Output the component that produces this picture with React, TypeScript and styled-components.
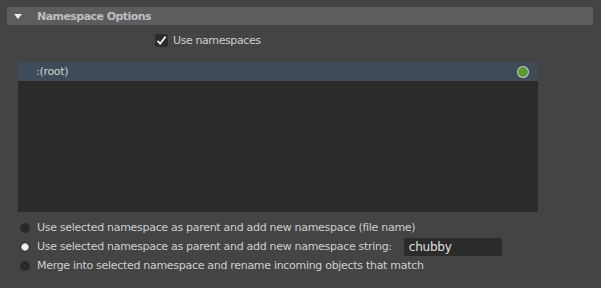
import React from "react";
import styled, { createGlobalStyle } from "styled-components";

const Global = createGlobalStyle`
  html, body { margin: 0; padding: 0; background: #444444; }
  body { font-family: "DejaVu Sans", "Liberation Sans", sans-serif; font-size: 11px; color: #cfcfcf; letter-spacing: -0.3px; }
`;

const Page = styled.div`
  width: 601px;
  height: 288px;
  padding-top: 7px;
  box-sizing: border-box;
  overflow: hidden;
`;

const Header = styled.div`
  margin: 0 8px 0 7px;
  height: 18px;
  border-radius: 2px;
  background: #5d5d5d;
  display: flex;
  align-items: center;
`;

const Triangle = styled.span`
  width: 0;
  height: 0;
  margin-left: 7px;
  border-left: 4.5px solid transparent;
  border-right: 4.5px solid transparent;
  border-top: 5px solid #eeeeee;
`;

const HeaderTitle = styled.span`
  margin-left: 15px;
  font-weight: bold;
  letter-spacing: -0.55px;
  color: #bdbdc2;
`;

const CheckRow = styled.label`
  display: flex;
  align-items: center;
  margin-top: 9px;
  padding-left: 155px;
  height: 13px;
  letter-spacing: -0.4px;
`;

const Box = styled.span`
  width: 13px;
  height: 13px;
  border-radius: 2px;
  background: #2b2b2b;
  display: flex;
  align-items: center;
  justify-content: center;
  margin-right: 5px;
`;

const List = styled.div`
  margin: 15px 0 0 18px;
  width: 520px;
  height: 150px;
  background: #2b2b2b;
`;

const ListRow = styled.div<{ $selected?: boolean }>`
  height: 19px;
  display: flex;
  align-items: center;
  padding: 0 10px 0 18px;
  background: ${(p) => (p.$selected ? "#3f4b59" : "transparent")};
  color: #d2d2d2;
`;

const RowLabel = styled.span`
  flex: 1;
`;

const Dot = styled.span`
  width: 10px;
  height: 10px;
  border-radius: 50%;
  background: #5b9a2f;
  box-shadow: 0 0 0 1px #c9cfd3;
`;

const Options = styled.div`
  margin-top: 6px;
  padding-left: 20px;
  display: flex;
  flex-direction: column;
`;

const OptionRow = styled.label`
  height: 19px;
  display: flex;
  align-items: center;
`;

const Radio = styled.span<{ $checked?: boolean }>`
  width: 10px;
  height: 10px;
  border-radius: 50%;
  margin-right: 7px;
  background: ${(p) =>
    p.$checked
      ? "radial-gradient(circle, #f0f0f0 0 2.6px, #b5b5b5 3.2px 3.6px, #2a2a2a 4.3px)"
      : "#2a2a2a"};
`;

const TextField = styled.div`
  margin-left: 12px;
  width: 98px;
  height: 18px;
  box-sizing: border-box;
  border-radius: 2px;
  background: #2b2b2b;
  color: #e0e0e0;
  display: flex;
  align-items: center;
  padding-left: 5px;
  font-size: 12px;
  letter-spacing: -0.2px;
`;

export default function App() {
  return (
    <Page>
      <Global />
      <Header>
        <Triangle />
        <HeaderTitle>Namespace Options</HeaderTitle>
      </Header>
      <CheckRow>
        <Box>
          <svg width="11" height="11" viewBox="0 0 11 11">
            <polyline points="1.5,5.8 4.2,8.6 9.6,1.6" fill="none" stroke="#f0f0f0" strokeWidth="1.8" />
          </svg>
        </Box>
        Use namespaces
      </CheckRow>
      <List>
        <ListRow $selected>
          <RowLabel>:(root)</RowLabel>
          <Dot />
        </ListRow>
      </List>
      <Options>
        <OptionRow>
          <Radio />
          Use selected namespace as parent and add new namespace (file name)
        </OptionRow>
        <OptionRow>
          <Radio $checked />
          Use selected namespace as parent and add new namespace string:
          <TextField>chubby</TextField>
        </OptionRow>
        <OptionRow>
          <Radio />
          Merge into selected namespace and rename incoming objects that match
        </OptionRow>
      </Options>
    </Page>
  );
}
